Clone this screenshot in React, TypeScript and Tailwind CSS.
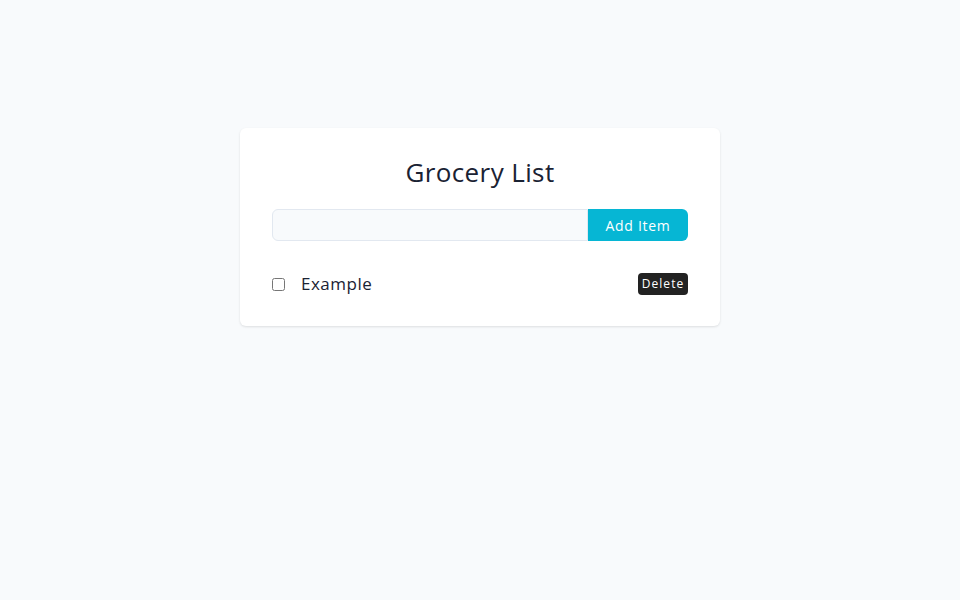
import React from "react";

export default function App() {
  return (
    <div className="min-h-screen w-full bg-[#f8fafc] flex justify-center pt-[128px]" style={{ fontFamily: '"Open Sans", sans-serif' }}>
      <div className="w-[480px] h-[198px] bg-white rounded-md shadow-[0_1px_3px_rgba(0,0,0,0.08),0_1px_2px_rgba(0,0,0,0.04)] px-8 pt-8">
        <h1 className="text-center text-[26px] leading-[31px] text-[#1a2233] tracking-[0.015em] -mt-[3px] mb-[21px]">Grocery List</h1>
        <div className="flex h-8">
          <input className="flex-1 h-8 bg-[#f8fafc] border border-[#e2e8f0] rounded-l-md outline-none px-3" />
          <button className="w-[100px] h-8 bg-[#06b6d4] text-white text-[14px] tracking-[0.05em] rounded-r-md">Add Item</button>
        </div>
        <div className="flex items-center justify-between mt-8 h-[22px]">
          <div className="flex items-center">
            <input type="checkbox" className="w-[13px] h-[13px] m-0" />
            <span className="ml-4 text-[17px] text-[#1a2233] tracking-[0.03em]">Example</span>
          </div>
          <button className="h-[22px] w-[50px] bg-[#222222] text-white text-[12px] tracking-[0.09em] rounded-[4px]">Delete</button>
        </div>
      </div>
    </div>
  );
}
